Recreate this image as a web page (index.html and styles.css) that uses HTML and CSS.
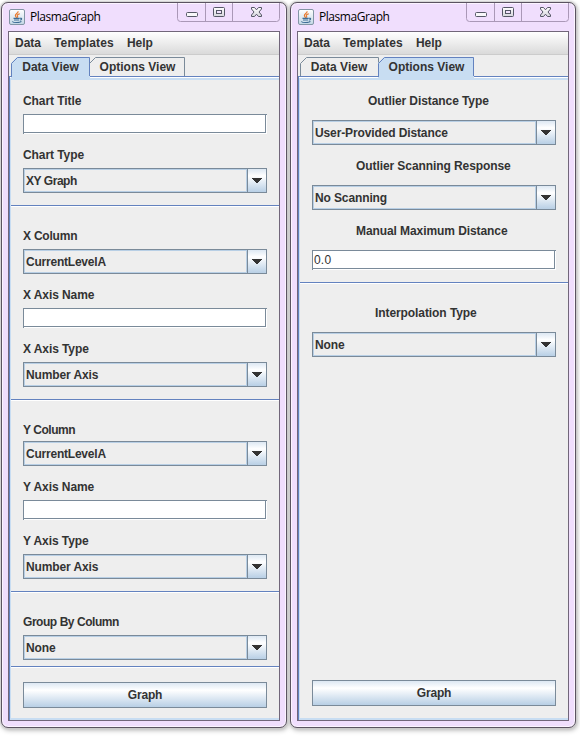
FILE: index.html
```
<!DOCTYPE html>
<html lang="en">
<head>
<meta charset="utf-8">
<title>PlasmaGraph</title>
<link rel="stylesheet" href="styles.css">
</head>
<body>
<svg class="defs" width="0" height="0">
  <symbol id="java" viewBox="0 0 16 16">
    <rect x=".5" y=".5" width="15" height="15" rx="1.500" fill="url(#tile)" stroke="#8395a5"/>
    <path d="M9 2.200C9.700 4 6 5 6.400 6.700c.2.9 1 1.300 1.200 2.100M10.800 4.700C8.700 5.400 7.900 6 8.500 7c.4.6.3 1-.2 1.600" fill="none" stroke="#e8782c" stroke-width="1.200"/>
    <path d="M4.500 9.400h6.200M5 11h5.200M3.300 12.500c1.200 1.500 8.100 1.400 9-.2M11 9.400c2-.6 2.300 1.300.2 1.700" fill="none" stroke="#3f6d96" stroke-width="1.100"/>
  </symbol>
  <linearGradient id="tile" x2="0" y2="1"><stop stop-color="#fff"/><stop offset="1" stop-color="#c3d7e5"/></linearGradient>
  <linearGradient id="glyph" x2="0" y2="1"><stop stop-color="#fff"/><stop offset="1" stop-color="#d5d5dc"/></linearGradient>
  <symbol id="controls" viewBox="0 0 103 20">
    <path d="M.5 0v15.500q0 3 3 3h96q3 0 3-3V0M28.500 0v18M55.500 0v18" fill="none" stroke="#aa98b7"/>
    <rect x="9.500" y="9.500" width="11" height="4" rx="1" fill="#f8f8fa" stroke="#555766"/>
    <rect x="36.500" y="4.500" width="11" height="9" rx="1" fill="url(#glyph)" stroke="#555766"/>
    <rect x="39.500" y="7.500" width="5" height="3" fill="#f1e1fd" stroke="#555766"/>
    <path d="M74.500 4.500h3l2 2.300 2-2.300h3v1.500l-2.500 3 2.500 3v1.500h-3l-2-2.300-2 2.300h-3V12l2.500-3-2.500-3z" fill="url(#glyph)" stroke="#555766"/>
  </symbol>
  <symbol id="arrow" viewBox="0 0 10 5"><path d="M0 0h10v1H9v1H8v1H7v1H6v1H4V4H3V3H2V2H1V1H0z" fill="#333"/></symbol>
</svg>
<main class="screen">
  <section class="window">
    <header class="titlebar"><svg class="logo"><use href="#java"/></svg><span class="title">PlasmaGraph</span><svg class="controls"><use href="#controls"/></svg></header>
    <div class="client">
      <nav class="menu"><span>Data</span><span class="wide">Templates</span><span>Help</span></nav>
      <div class="tabs">
        <div class="tab first active"><svg class="edge" viewBox="0 0 79 22"><path d="M.5 20V6.500l6-6h72V19" /></svg>Data View</div>
        <div class="tab second"><svg class="edge" viewBox="0 0 96 22"><path d="M.5 6.500l6-6h89V19"/></svg>Options View</div>
      </div>
      <div class="pane">
        <div class="group g1">
          <label>Chart Title</label><div class="field"></div>
          <label>Chart Type</label><div class="combo"><span class="tighter">XY Graph</span><i><svg><use href="#arrow"/></svg></i></div>
        </div>
        <div class="group g2">
          <label class="tight">X Column</label><div class="combo"><span class="tight">CurrentLevelA</span><i><svg><use href="#arrow"/></svg></i></div>
          <label>X Axis Name</label><div class="field"></div>
          <label>X Axis Type</label><div class="combo"><span>Number Axis</span><i><svg><use href="#arrow"/></svg></i></div>
        </div>
        <div class="group g3">
          <label class="tighter">Y Column</label><div class="combo"><span class="tight">CurrentLevelA</span><i><svg><use href="#arrow"/></svg></i></div>
          <label>Y Axis Name</label><div class="field"></div>
          <label>Y Axis Type</label><div class="combo"><span>Number Axis</span><i><svg><use href="#arrow"/></svg></i></div>
        </div>
        <div class="group g4">
          <label class="tighter">Group By Column</label><div class="combo"><span>None</span><i><svg><use href="#arrow"/></svg></i></div>
        </div>
        <div class="push">Graph</div>
      </div>
    </div>
  </section>
  <section class="window">
    <header class="titlebar"><svg class="logo"><use href="#java"/></svg><span class="title">PlasmaGraph</span><svg class="controls"><use href="#controls"/></svg></header>
    <div class="client">
      <nav class="menu"><span>Data</span><span class="wide">Templates</span><span>Help</span></nav>
      <div class="tabs">
        <div class="tab first"><svg class="edge" viewBox="0 0 79 22"><path d="M.5 19V6.500l6-6h72V19"/></svg>Data View</div>
        <div class="tab second active"><svg class="edge" viewBox="0 0 96 22"><path d="M.5 20V6.500l6-6h89V19"/></svg>Options View</div>
      </div>
      <div class="pane options">
        <div class="group o1">
          <label class="l1">Outlier Distance Type</label><div class="combo"><span>User-Provided Distance</span><i><svg><use href="#arrow"/></svg></i></div>
          <label class="l2">Outlier Scanning Response</label><div class="combo"><span>No Scanning</span><i><svg><use href="#arrow"/></svg></i></div>
          <label class="l3">Manual Maximum Distance</label><div class="field">0.0</div>
        </div>
        <div class="group o2">
          <label class="l4">Interpolation Type</label><div class="combo"><span>None</span><i><svg><use href="#arrow"/></svg></i></div>
        </div>
        <div class="push">Graph</div>
      </div>
    </div>
  </section>
</main>
</body>
</html>
```
FILE: styles.css
```
* { box-sizing: border-box; }
body { margin: 0; background: #fff; font: bold 12px/16px "Liberation Sans", Arial, sans-serif; color: #333; }
.defs { position: absolute; }
.screen { display: flex; gap: 3px; width: 580px; height: 737px; padding: 2px 0 0 1px; overflow: hidden; }
.window { width: 286px; height: 726px; border: 1px solid #5b5361; border-radius: 7px; padding: 0 6px; background: #f0defd; box-shadow: inset 0 0 0 1px #fbf4ff, 0 0 2px 1px #ccc, 1px 2px 5px #aaa; }
.titlebar { display: flex; height: 28px; align-items: flex-start; }
.logo { width: 16px; height: 16px; margin: 6px 0 0 1px; }
.title { margin: 5px 0 0 5px; font: 12px/18px "Open Sans", "Noto Sans", sans-serif; color: #000; letter-spacing: -.45px; }
.controls { width: 103px; height: 20px; margin-left: auto; }
.client { width: 272px; height: 690px; border: 1px solid #71667a; background: #eee; display: flex; flex-direction: column; }
.menu { height: 23px; flex: none; display: flex; gap: 13px; padding: 3px 0 0 6px; background: linear-gradient(#fff, #dadada); border-bottom: 1px solid #ccc; }
.tabs { display: flex; height: 19px; flex: none; margin-top: 2px; padding-left: 2px; }
.tab { position: relative; height: 19px; line-height: 20px; text-align: center; z-index: 1; }
.first { width: 78px; }
.second { width: 96px; padding-left: 1px; }
.tab.active { height: 21px; background: #c8ddf2; clip-path: polygon(0 6px, 6px 0, 100% 0, 100% 100%, 0 100%); }
.first.active { width: 79px; margin-right: -1px; }
.edge { position: absolute; left: 0; top: 0; height: 22px; width: 79px; fill: none; stroke: #7a8a99; }
.second .edge { width: 96px; }
.active .edge { stroke: #6382bf; }
.pane { flex: 1; display: flex; flex-direction: column; border-top: 1px solid #6382bf; border-left: 1px solid #6382bf; box-shadow: inset 0 1px #fff, inset 0 3px #c8ddf2, inset 1px 0 #c8ddf2, inset 0 -2px #c8ddf2; padding-left: 1px; }
.group { display: flex; flex-direction: column; padding-left: 12px; border-bottom: 1px solid #6382bf; box-shadow: 0 1px #fff; }
.g1 { height: 129px; padding-top: 16px; }
.g2, .g3 { height: 194px; padding-top: 22px; }
.g3 { height: 192px; }
.g4 { height: 75px; padding-top: 22px; }
label { height: 16px; margin-bottom: 5px; white-space: nowrap; letter-spacing: -.08px; }
.g3 .combo:nth-child(2) { margin-top: -2px; }
.field { width: 244px; height: 20px; flex: none; border: 1px solid #7a8a99; border-right: 0; border-bottom: 0; background: #fff; box-shadow: inset -1px -1px #fff, inset -2px -2px #7a8a99; margin-bottom: 13px; font-weight: normal; line-height: 19px; padding-left: 1px; letter-spacing: .2px; }
.combo { width: 244px; height: 25px; flex: none; border: 1px solid #7a8a99; display: flex; margin-bottom: 13px; }
.combo span { flex: 1; border: 1px solid #b8cfe5; padding-left: 1px; line-height: 22px; letter-spacing: -.12px; }
.combo i { width: 19px; border-left: 1px solid #7a8a99; background: linear-gradient(#dde8f3, #fff 30%, #b8cfe5); }
.combo svg { display: block; width: 10px; height: 5px; margin: 9px 0 0 4px; }
label.tight, .combo .tight { letter-spacing: -.22px; }
label.tighter, .combo .tighter { letter-spacing: -.45px; }
.wide { letter-spacing: .16px; }
.push { width: 244px; height: 26px; margin: auto 0 12px 12px; border: 1px solid #7a8a99; background: linear-gradient(#dde8f3, #fff 30%, #b8cfe5); text-align: center; line-height: 25px; letter-spacing: -.15px; }
.options label { margin-bottom: 11px; }
.l1 { padding-left: 56px; }
.l2 { padding-left: 44px; }
.l3 { padding-left: 44px; }
.l4 { padding-left: 63px; }
.o1 { height: 206px; padding-top: 16px; }
.o2 { border: 0; box-shadow: none; padding-top: 22px; }
.options .push { margin-bottom: 14px; }
```
